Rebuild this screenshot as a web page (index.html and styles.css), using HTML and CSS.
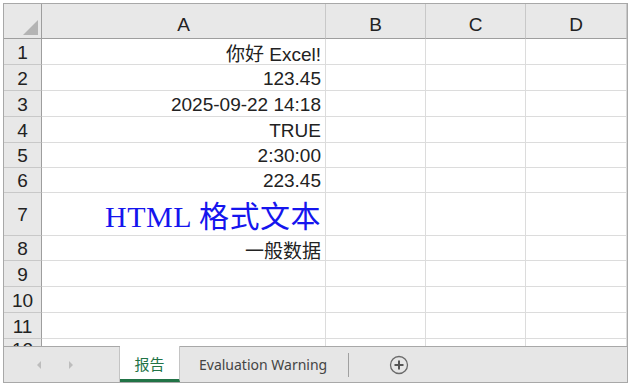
FILE: index.html
```html
<!DOCTYPE html>
<html lang="zh">
<head>
    <meta charset="UTF-8">
    <title>报告</title>
    <link rel="stylesheet" href="styles.css">
</head>
<body>
    <div class="frame">
        <div class="sheet">
            <div class="hd corner"><span class="tri"></span></div>
            <div class="hd col">A</div>
            <div class="hd col">B</div>
            <div class="hd col">C</div>
            <div class="hd col">D</div>

            <div class="hd num">1</div><div class="cell">你好 Excel!</div><div class="cell"></div><div class="cell"></div><div class="cell"></div>
            <div class="hd num">2</div><div class="cell">123.45</div><div class="cell"></div><div class="cell"></div><div class="cell"></div>
            <div class="hd num">3</div><div class="cell">2025-09-22 14:18</div><div class="cell"></div><div class="cell"></div><div class="cell"></div>
            <div class="hd num">4</div><div class="cell">TRUE</div><div class="cell"></div><div class="cell"></div><div class="cell"></div>
            <div class="hd num">5</div><div class="cell">2:30:00</div><div class="cell"></div><div class="cell"></div><div class="cell"></div>
            <div class="hd num">6</div><div class="cell">223.45</div><div class="cell"></div><div class="cell"></div><div class="cell"></div>
            <div class="hd num">7</div><div class="cell html">HTML 格式文本</div><div class="cell"></div><div class="cell"></div><div class="cell"></div>
            <div class="hd num">8</div><div class="cell">一般数据</div><div class="cell"></div><div class="cell"></div><div class="cell"></div>
            <div class="hd num">9</div><div class="cell"></div><div class="cell"></div><div class="cell"></div><div class="cell"></div>
            <div class="hd num">10</div><div class="cell"></div><div class="cell"></div><div class="cell"></div><div class="cell"></div>
            <div class="hd num">11</div><div class="cell"></div><div class="cell"></div><div class="cell"></div><div class="cell"></div>
            <div class="hd num last">12</div><div class="cell"></div><div class="cell"></div><div class="cell"></div><div class="cell"></div>
        </div>
        <div class="tabs">
            <div class="nav">
                <span class="arrow left"></span>
                <span class="arrow right"></span>
            </div>
            <div class="tab active">报告</div>
            <div class="tab">Evaluation Warning</div>
            <div class="sep"></div>
            <div class="add">
                <svg width="20" height="20" viewBox="0 0 20 20">
                    <circle cx="10" cy="10" r="8.5" fill="none" stroke="#6a6a6a" stroke-width="1.3"/>
                    <path d="M10 5.5v9M5.5 10h9" stroke="#555" stroke-width="2"/>
                </svg>
            </div>
        </div>
    </div>
</body>
</html>
```

FILE: styles.css
```css
body {
    margin: 0;
    background-color: #ffffff;
    font-family: "Liberation Sans", Arial, "Noto Sans CJK SC", sans-serif;
}

.frame {
    margin: 3px 0 0 3px;
    width: 623px;
    border: 1px solid #a8a8a8;
    background-color: #ffffff;
}

.sheet {
    display: grid;
    grid-template-columns: 38px 284px 100px 100px 101px;
    grid-template-rows: 35px 26px 26px 26px 26px 25px 25px 43px 25px 26px 26px 26px 26px;
    height: 342px;
    overflow: hidden;
}

.hd {
    background-color: #e8e8e8;
    color: #222;
    font-size: 19px;
    display: flex;
    align-items: center;
    justify-content: center;
    border-right: 1px solid #c8c8c8;
    border-bottom: 1px solid #c8c8c8;
    box-sizing: border-box;
}

.col {
    padding-top: 8px;
}

.num {
    border-right: 1px solid #9e9e9e;
    padding-top: 2px;
}

.num.last {
    align-items: flex-start;
    padding-top: 0;
}

.corner {
    position: relative;
    border-bottom: 1px solid #9e9e9e;
    border-right: 1px solid #9e9e9e;
}

.tri {
    position: absolute;
    right: 3px;
    bottom: 3px;
    width: 0;
    height: 0;
    border-left: 15px solid transparent;
    border-bottom: 15px solid #b4b4b4;
}

.sheet .col {
    border-bottom: 1px solid #9e9e9e;
}

.cell {
    border-right: 1px solid #dcdcdc;
    border-bottom: 1px solid #dcdcdc;
    box-sizing: border-box;
    font-size: 19px;
    color: #222;
    display: flex;
    align-items: center;
    justify-content: flex-end;
    padding: 2px 4px 0 0;
    white-space: nowrap;
}

.html {
    font-family: "Liberation Serif", "Times New Roman", "Noto Sans CJK SC", serif;
    font-size: 30px;
    color: #1515ee;
    padding-top: 0;
    letter-spacing: 0.5px;
}

.tabs {
    display: flex;
    align-items: stretch;
    height: 36px;
    background-color: #e6e6e6;
    border-top: 1px solid #a8a8a8;
    box-sizing: border-box;
    font-family: "Noto Sans", "Noto Sans CJK SC", sans-serif;
}

.nav {
    width: 116px;
    display: flex;
    align-items: center;
    gap: 28px;
    padding-left: 33px;
    box-sizing: border-box;
    border-right: 1px solid #c4c4c4;
}

.arrow {
    width: 0;
    height: 0;
    border-top: 4px solid transparent;
    border-bottom: 4px solid transparent;
}

.arrow.left {
    border-right: 4px solid #bdbdbd;
}

.arrow.right {
    border-left: 4px solid #bdbdbd;
}

.tab {
    display: flex;
    align-items: center;
    padding: 0 21px 0 19px;
    font-size: 14px;
    color: #444;
}

.tab.active {
    background-color: #ffffff;
    color: #217346;
    font-size: 15px;
    width: 60px;
    padding: 2px 0 0 0;
    box-sizing: border-box;
    justify-content: center;
    margin-top: -1px;
    border-right: 1px solid #c4c4c4;
    border-bottom: 3px solid #217346;
    white-space: nowrap;
}

.sep {
    width: 1px;
    background-color: #a0a0a0;
    margin: 6px 0 5px 0;
}

.add {
    display: flex;
    align-items: center;
    padding-left: 40px;
}
```
